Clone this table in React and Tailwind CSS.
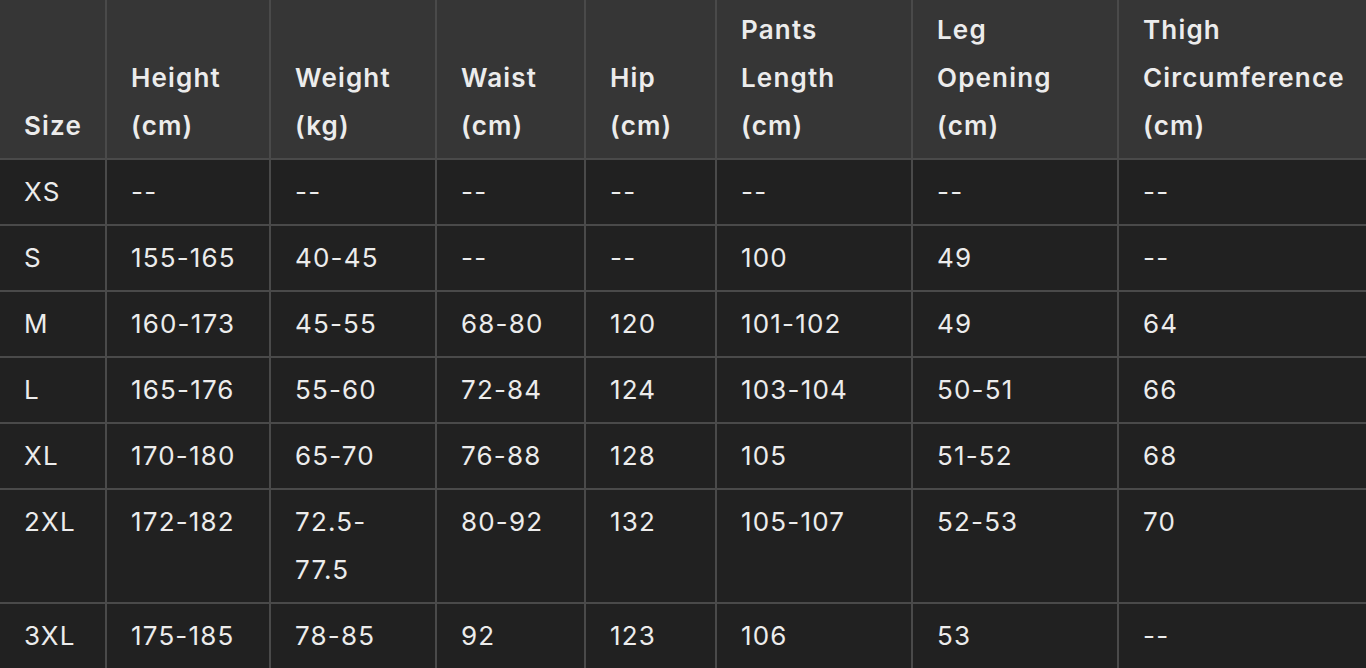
const headers = [
  ['Size'],
  ['Height', '(cm)'],
  ['Weight', '(kg)'],
  ['Waist', '(cm)'],
  ['Hip', '(cm)'],
  ['Pants', 'Length', '(cm)'],
  ['Leg', 'Opening', '(cm)'],
  ['Thigh', 'Circumference', '(cm)'],
];

const widths = ['w-[106px]', 'w-[164px]', 'w-[166px]', 'w-[149px]', 'w-[131px]', 'w-[196px]', 'w-[206px]', 'w-[248px]'];

const rows = [
  ['XS', '--', '--', '--', '--', '--', '--', '--'],
  ['S', '155-165', '40-45', '--', '--', '100', '49', '--'],
  ['M', '160-173', '45-55', '68-80', '120', '101-102', '49', '64'],
  ['L', '165-176', '55-60', '72-84', '124', '103-104', '50-51', '66'],
  ['XL', '170-180', '65-70', '76-88', '128', '105', '51-52', '68'],
  ['2XL', '172-182', '72.5-77.5', '80-92', '132', '105-107', '52-53', '70'],
  ['3XL', '175-185', '78-85', '92', '123', '106', '53', '--'],
];

export default function App() {
  return (
    <div className="w-[1366px] h-[668px] overflow-hidden bg-[#212121] font-['Inter',sans-serif] text-[#ececec] text-[26px] leading-[48px] tracking-[0.045em]">
      <table className="w-[1366px] table-fixed border-collapse">
        <colgroup>
          {widths.map((w, i) => (
            <col key={i} className={w} />
          ))}
        </colgroup>
        <thead>
          <tr className="bg-[#363636]">
            {headers.map((h, i) => (
              <th
                key={i}
                className={`align-bottom text-left font-semibold pl-6 pr-1 pt-[6px] pb-2 border-[#4a4a4a] border-b-2 whitespace-nowrap ${i > 0 ? 'border-l-2' : ''}`}
              >
                {h.map((line, j) => (
                  <div key={j}>{line}</div>
                ))}
              </th>
            ))}
          </tr>
        </thead>
        <tbody>
          {rows.map((r, ri) => (
            <tr key={ri}>
              {r.map((c, ci) => (
                <td
                  key={ci}
                  className={`align-top pl-6 pr-1 py-2 border-[#4a4a4a] whitespace-nowrap ${ri < rows.length - 1 ? 'border-b-2' : ''} ${ci > 0 ? 'border-l-2' : ''}`}
                >
                  {c === '72.5-77.5' ? (
                    <>
                      <div>72.5-</div>
                      <div>77.5</div>
                    </>
                  ) : (
                    c
                  )}
                </td>
              ))}
            </tr>
          ))}
        </tbody>
      </table>
    </div>
  );
}
